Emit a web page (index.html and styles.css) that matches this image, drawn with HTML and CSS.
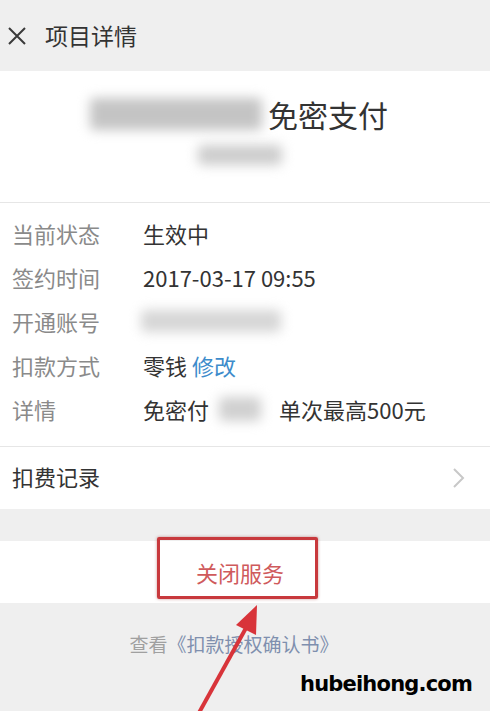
FILE: index.html
```html
<!DOCTYPE html>
<html lang="zh">
<head>
<meta charset="utf-8">
<link rel="stylesheet" href="styles.css">
</head>
<body>
<div class="page">
  <header class="topbar">
    <svg class="close-icon" width="20" height="20" viewBox="0 0 20 20"><path d="M2 2 L18 18 M18 2 L2 18" stroke="#3a3a3a" stroke-width="2" fill="none"/></svg>
    <span class="topbar-title">项目详情</span>
  </header>

  <section class="summary">
    <div class="summary-title">
      <span class="blur blur-name"></span><span class="summary-text">免密支付</span>
    </div>
    <span class="blur blur-sub"></span>
  </section>

  <section class="info">
    <div class="row"><span class="label">当前状态</span><span class="value">生效中</span></div>
    <div class="row"><span class="label">签约时间</span><span class="value">2017-03-17 09:55</span></div>
    <div class="row"><span class="label">开通账号</span><span class="blur blur-account"></span></div>
    <div class="row"><span class="label">扣款方式</span><span class="value">零钱 <span class="link">修改</span></span></div>
    <div class="row"><span class="label">详情</span><span class="value">免密付</span><span class="blur blur-detail"></span><span class="value">单次最高500元</span></div>
  </section>

  <section class="record">
    <span class="record-text">扣费记录</span>
    <svg class="chevron" width="14" height="22" viewBox="0 0 14 22"><path d="M2 2 L11 11 L2 20" stroke="#c8c8c8" stroke-width="2" fill="none"/></svg>
  </section>

  <div class="gap"></div>

  <section class="action">
    <span class="action-text">关闭服务</span>
    <div class="annot-box"></div>
  </section>

  <footer class="footer">
    <span class="footer-gray">查看</span><span class="footer-link">《扣款授权确认书》</span>
  </footer>

  <svg class="arrow" width="120" height="120" viewBox="0 0 120 120">
    <path d="M15 125 L66 33" stroke="#d8343a" stroke-width="4" fill="none"/>
    <polygon points="77,10 76,40 56,30" fill="#d8343a"/>
  </svg>

  <div class="watermark">hubeihong.com</div>
</div>
</body>
</html>
```
FILE: styles.css
```css
* { box-sizing: border-box; }
html, body { margin: 0; padding: 0; }
body {
  background: #efefef;
  font-family: "Noto Sans CJK SC", "Noto Sans", sans-serif;
  color: #333;
}
.page {
  position: relative;
  width: 490px;
  height: 711px;
  overflow: hidden;
  background: #efefef;
}
.topbar {
  height: 71px;
  display: flex;
  align-items: center;
  padding-left: 7px;
  background: #efefef;
}
.close-icon { flex: none; }
.topbar-title {
  margin-left: 18px;
  font-size: 23px;
  color: #333;
  line-height: 1;
}
.summary {
  background: #fff;
  height: 132px;
  display: flex;
  flex-direction: column;
  align-items: center;
  padding-top: 22px;
  border-bottom: 1px solid #e6e6e6;
}
.summary-title {
  display: flex;
  align-items: center;
  height: 42px;
  margin-right: 12px;
}
.blur {
  display: inline-block;
  background: #c4c4c4;
  filter: blur(6px);
  border-radius: 4px;
}
.blur-name { width: 172px; height: 32px; margin-right: 6px; }
.summary-text { font-size: 30px; color: #333; line-height: 1; }
.blur-sub { width: 84px; height: 20px; margin-top: 10px; margin-right: 10px; background: #cdcdcd; }
.info {
  background: #fff;
  padding: 8px 0 15px 12px;
  border-bottom: 1px solid #e6e6e6;
}
.row {
  height: 44px;
  display: flex;
  align-items: center;
  font-size: 22px;
  line-height: 1;
}
.label { width: 131px; color: #8a8a8a; flex: none; }
.value { color: #333; }
.link { color: #3d8ccb; }
.blur-account { width: 140px; height: 22px; background: #d6d6d6; margin-left: -2px; }
.blur-detail { width: 42px; height: 24px; margin: 0 18px 0 10px; background: #d0d0d0; }
.record {
  background: #fff;
  height: 62px;
  display: flex;
  align-items: center;
  justify-content: space-between;
  padding: 0 24px 4px 12px;
}
.record-text { font-size: 22px; color: #333; line-height: 1; }
.chevron { margin-top: 4px; }
.gap { height: 32px; background: #efefef; }
.action {
  position: relative;
  background: #fff;
  height: 62px;
  display: flex;
  align-items: center;
  justify-content: center;
}
.action-text { font-size: 22px; color: #cf5a5c; line-height: 1; margin-right: 10px; }
.annot-box {
  position: absolute;
  left: 157px;
  top: -4px;
  width: 161px;
  height: 62px;
  border: 3px solid #c8393d;
  border-radius: 2px;
  box-shadow: 0 0 3px rgba(150, 40, 40, 0.5);
}
.footer {
  height: 80px;
  display: flex;
  align-items: center;
  justify-content: center;
  font-size: 19px;
  line-height: 1;
  padding-right: 22px;
}
.footer-gray { color: #a0a0a0; }
.footer-link { color: #7f8fae; }
.arrow {
  position: absolute;
  left: 180px;
  top: 595px;
}
.watermark {
  position: absolute;
  left: 300px;
  top: 674px;
  font-family: "DejaVu Sans", sans-serif;
  font-weight: bold;
  font-size: 21px;
  color: #000;
  letter-spacing: -0.8px;
  line-height: 1;
  white-space: nowrap;
}
```
